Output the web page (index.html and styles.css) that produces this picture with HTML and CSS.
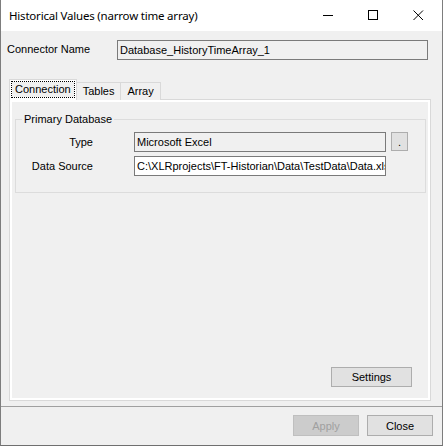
FILE: index.html
```html
<!DOCTYPE html>
<html lang="en">
<head>
    <meta charset="UTF-8">
    <title>Historical Values (narrow time array)</title>
    <link rel="stylesheet" href="styles.css">
</head>
<body>
    <div class="window">
        <div class="title-bar">
            <span class="title-text">Historical Values (narrow time array)</span>
            <div class="title-controls">
                <span class="ctl">
                    <svg width="11" height="11" viewBox="0 0 11 11"><path d="M0 5.5H10" stroke="#000" stroke-width="1"/></svg>
                </span>
                <span class="ctl">
                    <svg width="11" height="11" viewBox="0 0 11 11"><rect x="0.5" y="0.5" width="9" height="9" fill="none" stroke="#000" stroke-width="1"/></svg>
                </span>
                <span class="ctl">
                    <svg width="11" height="11" viewBox="0 0 11 11"><path d="M0.5 0.5L10 10M10 0.5L0.5 10" stroke="#000" stroke-width="1"/></svg>
                </span>
            </div>
        </div>

        <div class="client">
            <div class="name-row">
                <span class="name-label">Connector Name</span>
                <div class="textbox readonly name-box">Database_HistoryTimeArray_1</div>
            </div>

            <div class="tabs">
                <div class="tab-strip">
                    <div class="tab selected"><span class="focus">Connection</span></div>
                    <div class="tab">Tables</div>
                    <div class="tab">Array</div>
                </div>
                <div class="tab-panel">
                    <div class="tab-page">
                        <fieldset class="group">
                            <legend>Primary Database</legend>
                            <div class="field-grid">
                                <span class="field-label">Type</span>
                                <div class="textbox readonly">Microsoft Excel</div>
                                <button class="btn dots">.</button>

                                <span class="field-label">Data Source</span>
                                <div class="textbox">C:\XLRprojects\FT-Historian\Data\TestData\Data.xlsx</div>
                                <span></span>
                            </div>
                        </fieldset>

                        <div class="page-footer">
                            <button class="btn settings">Settings</button>
                        </div>
                    </div>
                </div>
            </div>

            <div class="dialog-buttons">
                <button class="btn disabled">Apply</button>
                <button class="btn">Close</button>
            </div>
        </div>
    </div>
</body>
</html>
```

FILE: styles.css
```css
* {
    margin: 0;
    padding: 0;
    box-sizing: border-box;
}

body {
    font-family: "Liberation Sans", Arial, sans-serif;
    font-size: 11px;
    color: #000;
    background: #f0f0f0;
}

.window {
    width: 443px;
    height: 446px;
    display: flex;
    flex-direction: column;
    border-left: 1px solid #7d7d7d;
    border-right: 1px solid #7d7d7d;
    border-bottom: 1px solid #6f6f6f;
}

.title-bar {
    height: 31px;
    background: #fff;
    display: flex;
    align-items: center;
    padding-left: 8px;
}

.title-text {
    font-family: "Noto Sans", "Open Sans", sans-serif;
    font-size: 11.5px;
    letter-spacing: -0.2px;
    margin-top: -1px;
}

.title-controls {
    margin-left: auto;
    display: flex;
    align-items: center;
    padding-right: 18px;
    gap: 34px;
}

.ctl {
    width: 11px;
    height: 11px;
    display: block;
}

.ctl svg {
    display: block;
}

.client {
    flex: 1;
    display: flex;
    flex-direction: column;
    background: #f0f0f0;
}

/* connector name row */
.name-row {
    display: flex;
    align-items: center;
    margin-top: 9px;
    padding-left: 6px;
}

.name-label {
    width: 110px;
    margin-top: -2px;
}

.textbox {
    height: 20px;
    border: 1px solid #7a7a7a;
    background: #fff;
    padding: 0 2px;
    line-height: 18px;
    white-space: nowrap;
    overflow: hidden;
}

.textbox.readonly {
    background: #f0f0f0;
}

.name-box {
    width: 311px;
}

/* tab control */
.tabs {
    margin: 19px 0 0 8px;
    width: 422px;
}

.tab-strip {
    display: flex;
    align-items: flex-end;
    height: 21px;
    position: relative;
    z-index: 1;
    margin-bottom: -1px;
}

.tab {
    height: 18px;
    border: 1px solid #d9d9d9;
    border-bottom: none;
    background: #f0f0f0;
    padding: 0 6px;
    line-height: 17px;
    margin-left: -1px;
}

.tab.selected {
    height: 21px;
    margin-left: 0;
    background: #fff;
    padding: 2px 2px 0 2px;
    border-color: #d9d9d9;
}

.focus {
    display: block;
    outline: 1px dotted #000;
    outline-offset: 0;
    padding: 0 3px;
    line-height: 15px;
    background: #f0f0f0;
}

.tab-panel {
    height: 302px;
    border: 1px solid #d9d9d9;
    background: #fff;
    padding: 2px;
}

.tab-page {
    height: 100%;
    background: #f0f0f0;
    display: flex;
    flex-direction: column;
    padding: 11px 2px 0 3px;
}

/* group box */
.group {
    border: 1px solid #dcdcdc;
    height: 80px;
    padding: 0;
}

.group legend {
    margin-left: 6px;
    padding: 0 2px;
}

.field-grid {
    display: grid;
    grid-template-columns: 113px 252px 17px;
    grid-auto-rows: 20px;
    column-gap: 5px;
    row-gap: 4px;
    align-items: center;
    padding-top: 7px;
}

.field-label {
    justify-self: end;
    margin-right: 36px;
    margin-top: -1px;
}

/* buttons */
.btn {
    font-family: "Liberation Sans", Arial, sans-serif;
    font-size: 11px;
    color: #000;
    background: #e1e1e1;
    border: 1px solid #adadad;
    height: 20px;
}

.btn.dots {
    height: 19px;
    width: 17px;
    line-height: 14px;
    align-self: start;
}

.btn.disabled {
    background: #cccccc;
    border-color: #bfbfbf;
    color: #a0a0a0;
}

.page-footer {
    margin-top: auto;
    display: flex;
    justify-content: flex-end;
    padding: 0 14px 11px 0;
}

.settings {
    width: 81px;
}

.dialog-buttons {
    margin-top: 5px;
    border-top: 1px solid #a0a0a0;
    display: flex;
    justify-content: flex-end;
    gap: 8px;
    padding: 8px 9px 0 0;
}

.dialog-buttons .btn {
    width: 66px;
    height: 21px;
}
```
